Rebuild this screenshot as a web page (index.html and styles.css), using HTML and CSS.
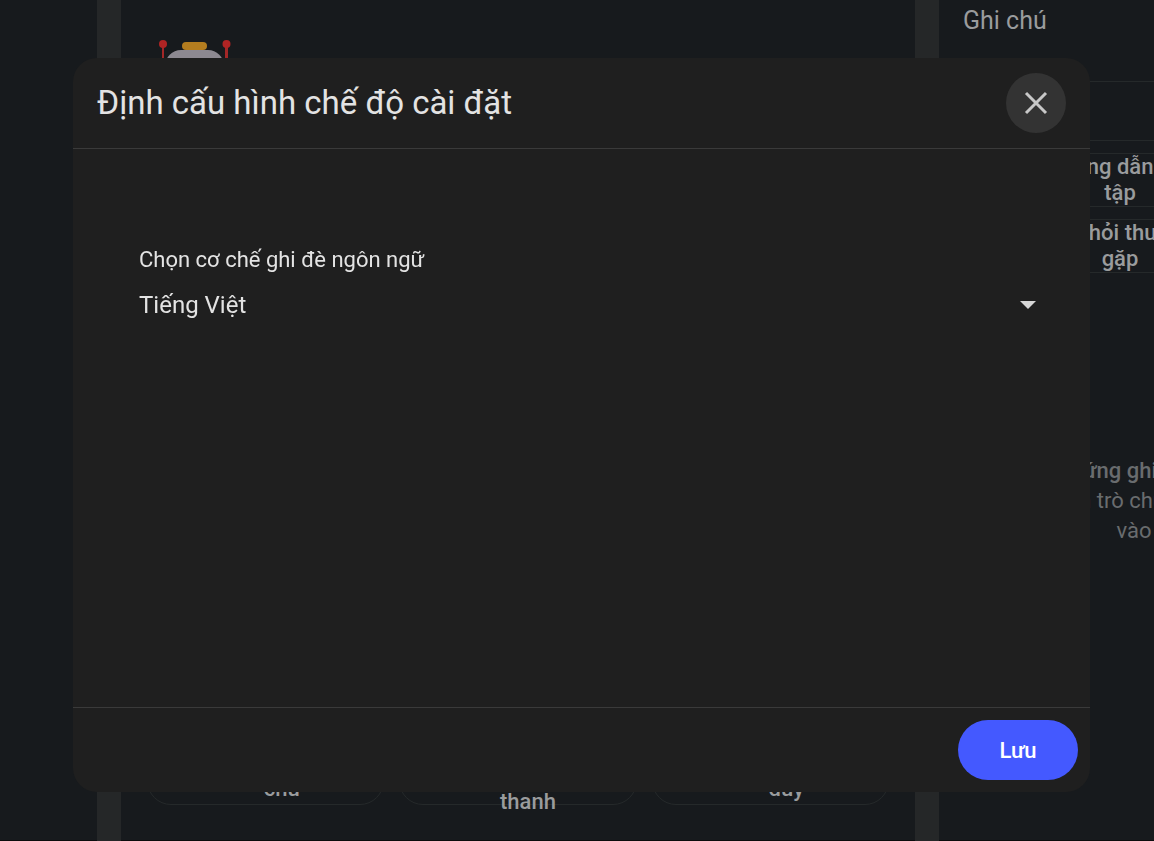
FILE: index.html
```
<!DOCTYPE html>
<html lang="vi">
<head>
    <title>Định cấu hình chế độ cài đặt</title>
    <meta charset="UTF-8">
    <meta name="viewport" content="width=device-width, initial-scale=1.0">
    <link rel="stylesheet" href="styles.css">
</head>
<body>
    <div class="workspace">
        <div class="sources"></div>

        <main class="chat">
            <svg class="robot" viewBox="0 0 72 60" width="72" height="60" aria-hidden="true">
                <rect x="3" y="5" width="2" height="30" fill="#a32727"/>
                <circle cx="4" cy="4" r="4" fill="#b02424"/>
                <rect x="66" y="5" width="3" height="30" fill="#a32727"/>
                <circle cx="67.5" cy="4" r="4" fill="#b02424"/>
                <rect x="6" y="10" width="59" height="46" rx="16" fill="#8d8991"/>
                <rect x="23" y="2" width="25" height="8" rx="4" fill="#b47d1f"/>
            </svg>
            <div class="chips">
                <button class="chip" type="button"><span class="chip-icon"></span><span>Thêm ghi<br>chú</span></button>
                <button class="chip compact" type="button"><span class="chip-icon"></span><span>Bản ghi<br>bằng âm<br>thanh</span></button>
                <button class="chip" type="button"><span class="chip-icon"></span><span>Sơ đồ tư<br>duy</span></button>
            </div>
        </main>

        <aside class="notes">
            <div class="notes-inner">
                <h2>Ghi chú</h2>
                <div class="toolbar"></div>
                <div class="tiles">
                    <button class="tile" type="button">Hướng dẫn học<br>tập</button>
                    <button class="tile" type="button">Câu hỏi thường<br>gặp</button>
                </div>
                <div class="empty">
                    <strong>Đáp ứng ghi chú đã</strong>
                    <p>tin nhắn trò chuyện được<br>vào</p>
                </div>
            </div>
        </aside>
    </div>

    <div class="overlay">
        <form class="dialog" role="dialog" aria-labelledby="dialogTitle">
            <header class="dialog-header">
                <h1 id="dialogTitle">Định cấu hình chế độ cài đặt</h1>
                <button class="close" type="button" aria-label="Đóng">
                    <svg viewBox="0 0 24 24" width="24" height="24">
                        <path d="M2 2 L22 22 M22 2 L2 22" stroke="#c8c8c8" stroke-width="3" fill="none"/>
                    </svg>
                </button>
            </header>
            <div class="dialog-body">
                <label for="language">Chọn cơ chế ghi đè ngôn ngữ</label>
                <div class="select">
                    <select id="language" name="language">
                        <option selected>Tiếng Việt</option>
                    </select>
                    <svg viewBox="0 0 16 8" width="16" height="8" aria-hidden="true">
                        <path d="M0 0 H16 L8 8 Z" fill="#d6d6d6"/>
                    </svg>
                </div>
            </div>
            <footer class="dialog-footer">
                <button class="save" type="submit">Lưu</button>
            </footer>
        </form>
    </div>
</body>
</html>
```
FILE: styles.css
```
* {
    box-sizing: border-box;
}
body {
    margin: 0;
    font-family: Roboto, "Noto Sans", sans-serif;
    font-size: 22px;
    color: #e3e3e3;
    background: #252728;
    overflow: hidden;
}
h1, h2, p {
    margin: 0;
    font-weight: 400;
}
button, select {
    font: inherit;
    color: inherit;
    border: none;
    background: none;
    padding: 0;
    cursor: pointer;
}

/* Page behind the dialog */
.workspace {
    display: grid;
    grid-template-columns: 97px 1fr 215px;
    gap: 24px;
    height: 100vh;
    color: #9a9c9d;
}
.sources, .chat, .notes {
    background: #171a1d;
    border-bottom: 1px solid #0b0c0d;
    overflow: hidden;
}
.chat {
    display: flex;
    flex-direction: column;
    justify-content: space-between;
    padding: 40px 26px 35px;
}
.robot {
    margin-left: 12px;
}
.chips {
    display: grid;
    grid-template-columns: repeat(3, 1fr);
    gap: 15px;
}
.chip {
    display: flex;
    align-items: center;
    justify-content: center;
    gap: 8px;
    height: 54px;
    padding-bottom: 4px;
    border: 1px solid #25292a;
    border-radius: 24px;
    font-weight: 500;
    line-height: 26px;
}
.chip-icon {
    width: 24px;
}
.chip.compact .chip-icon {
    width: 12px;
}
.notes-inner {
    width: 362px;
}
.notes h2 {
    padding: 5px 24px 44px;
    font-size: 25px;
    line-height: 32px;
}
.toolbar {
    height: 60px;
    border-top: 1px solid #25292a;
    border-bottom: 1px solid #25292a;
}
.tiles {
    display: grid;
    gap: 12px;
    padding: 12px 24px;
}
.tile {
    height: 54px;
    border: 1px solid #25292a;
    border-radius: 24px;
    font-weight: 500;
    line-height: 26px;
}
.empty {
    padding: 171px 0 0 28px;
    text-align: center;
    line-height: 30px;
    color: #696c6e;
}
.empty strong {
    font-weight: 500;
}

/* Dialog */
.overlay {
    position: fixed;
    inset: 0;
    display: flex;
    padding: 58px 64px 49px 73px;
}
.dialog {
    flex: 1;
    display: flex;
    flex-direction: column;
    background: #1f1f1f;
    border-radius: 24px;
}
.dialog-header {
    display: flex;
    align-items: center;
    justify-content: space-between;
    padding: 15px 24px;
    border-bottom: 1px solid #3a3a3a;
}
.dialog-header h1 {
    font-size: 33px;
    line-height: 44px;
}
.close {
    display: grid;
    place-items: center;
    width: 60px;
    height: 60px;
    border-radius: 50%;
    background: #333333;
}
.dialog-body {
    flex: 1;
    padding: 96px 54px 24px 66px;
}
.dialog-body label {
    display: block;
    line-height: 30px;
}
.select {
    display: grid;
    align-items: center;
    margin-top: 10px;
}
.select select, .select svg {
    grid-area: 1 / 1;
}
.select select {
    width: 100%;
    height: 40px;
    font-size: 24px;
    appearance: none;
    outline: none;
}
.select svg {
    justify-self: end;
    pointer-events: none;
}
.dialog-footer {
    display: flex;
    justify-content: flex-end;
    padding: 12px;
    border-top: 1px solid #3a3a3a;
}
.save {
    width: 120px;
    height: 60px;
    border-radius: 30px;
    background: #4459ff;
    color: #ffffff;
    font-weight: 500;
}
```
